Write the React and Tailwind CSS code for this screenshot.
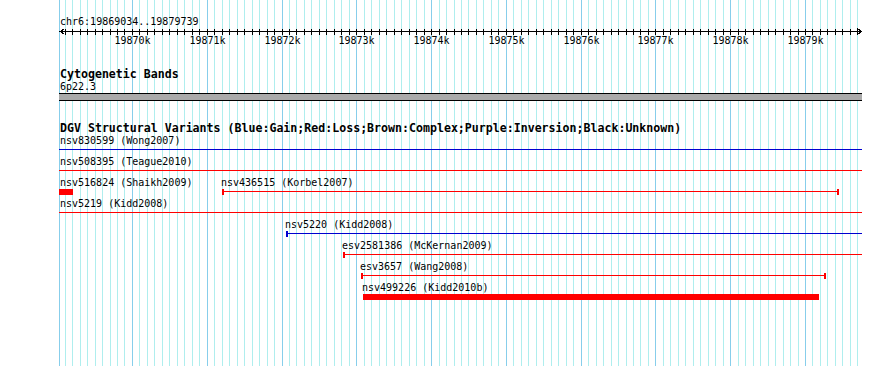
import React from 'react';

const START = 19869034;
const END = 19879739;
// page x of a base position (panel runs 59..861)
const px = (pos) => Math.round(59.7 + (pos - START) * 0.074783);

const gridStops = [];
for (let p = 19869100; p <= 19879700; p += 100) {
  gridStops.push({ x: px(p), major: p % 1000 === 0, pos: p });
}

const PANEL_LEFT = 59;
const PANEL_WIDTH = 803;

function Grid() {
  return (
    <svg className="absolute inset-0" width="890" height="366" shapeRendering="crispEdges">
      <line x1={59.5} x2={59.5} y1={0} y2={366} stroke="#87ceeb" />
      {gridStops.map((g) => (
        <line
          key={g.pos}
          x1={g.x + 0.5}
          x2={g.x + 0.5}
          y1={0}
          y2={366}
          stroke={g.major ? '#87ceeb' : '#afeeee'}
        />
      ))}
    </svg>
  );
}

function Ruler() {
  const majors = gridStops.filter((g) => g.major);
  return (
    <div className="relative h-[19px] w-[803px]">
      <svg className="absolute left-0 top-0" width="803" height="8" shapeRendering="crispEdges">
        <line x1={0} x2={803} y1={3.5} y2={3.5} stroke="#000" />
        {gridStops.map((g) => (
          <rect key={g.pos} x={g.x - PANEL_LEFT} y={1} width={1} height={6} fill="#000" />
        ))}
        <polyline points="5.5,0.5 1.5,3.5 5.5,6.5" fill="none" stroke="#000" />
        <polyline points="798.5,0.5 802.5,3.5 798.5,6.5" fill="none" stroke="#000" />
      </svg>
      {majors.map((g) => (
        <span
          key={g.pos}
          className="absolute top-[6px] -translate-x-1/2 text-[10px] leading-[13px] text-black"
          style={{ left: g.x - PANEL_LEFT + 0.5 }}
        >
          {Math.round(g.pos / 1000)}k
        </span>
      ))}
    </div>
  );
}

// one 21px row of the variants track; label above, glyph below
function Row({ children }) {
  return <div className="relative h-[21px] w-[803px]">{children}</div>;
}

function Label({ left, children }) {
  return (
    <span
      className="absolute top-0 whitespace-pre text-[10px] leading-[13px] text-black"
      style={{ left }}
    >
      {children}
    </span>
  );
}

function Span({ left, width, color, startTick, endTick }) {
  return (
    <>
      <div className="absolute top-[15px] h-px" style={{ left, width, background: color }} />
      {startTick && (
        <div className="absolute top-[13px] h-[6px] w-[2px]" style={{ left, background: color }} />
      )}
      {endTick && (
        <div
          className="absolute top-[13px] h-[6px] w-[2px]"
          style={{ left: left + width - 2, background: color }}
        />
      )}
    </>
  );
}

function Bar({ left, width }) {
  return <div className="absolute top-[13px] h-[6px] bg-[#ff0000]" style={{ left, width }} />;
}

const BLUE = '#0000d0';
const RED = '#ff0000';

export default function App() {
  return (
    <div className="relative h-[366px] w-[890px] overflow-hidden bg-white font-['DejaVu_Sans_Mono','Liberation_Mono',monospace] text-black">
      <Grid />

      <div className="relative flex flex-col pl-[59px] pt-[15px]">
        {/* Ruler */}
        <div className="pl-px text-[10px] leading-[13px]">chr6:{START}..{END}</div>
        <Ruler />

        {/* Cytogenetic Bands */}
        <div className="mt-[20px] pl-px text-[11.6px] font-bold leading-[14px]">Cytogenetic Bands</div>
        <div className="-mt-px pl-px text-[10px] leading-[13px]">6p22.3</div>
        <div className="h-[8px] w-[803px] border-y border-black bg-[#aaaaaa]" />

        {/* DGV */}
        <div className="mt-[20px] pl-px text-[11.6px] font-bold leading-[14px]">
          DGV Structural Variants (Blue:Gain;Red:Loss;Brown:Complex;Purple:Inversion;Black:Unknown)
        </div>
        <div className="-mt-px flex flex-col">
          <Row>
            <Label left={1}>nsv830599 (Wong2007)</Label>
            <Span left={0} width={PANEL_WIDTH} color={BLUE} />
          </Row>
          <Row>
            <Label left={1}>nsv508395 (Teague2010)</Label>
            <Span left={0} width={PANEL_WIDTH} color={RED} />
          </Row>
          <Row>
            <Label left={1}>nsv516824 (Shaikh2009)</Label>
            <Bar left={0} width={14} />
            <Label left={162}>nsv436515 (Korbel2007)</Label>
            <Span left={163} width={617} color={RED} startTick endTick />
          </Row>
          <Row>
            <Label left={1}>nsv5219 (Kidd2008)</Label>
            <Span left={0} width={PANEL_WIDTH} color={RED} />
          </Row>
          <Row>
            <Label left={226}>nsv5220 (Kidd2008)</Label>
            <Span left={227} width={576} color={BLUE} startTick />
          </Row>
          <Row>
            <Label left={283}>esv2581386 (McKernan2009)</Label>
            <Span left={284} width={519} color={RED} startTick />
          </Row>
          <Row>
            <Label left={301}>esv3657 (Wang2008)</Label>
            <Span left={302} width={465} color={RED} startTick endTick />
          </Row>
          <Row>
            <Label left={303}>nsv499226 (Kidd2010b)</Label>
            <Bar left={304} width={456} />
          </Row>
        </div>
      </div>
    </div>
  );
}
